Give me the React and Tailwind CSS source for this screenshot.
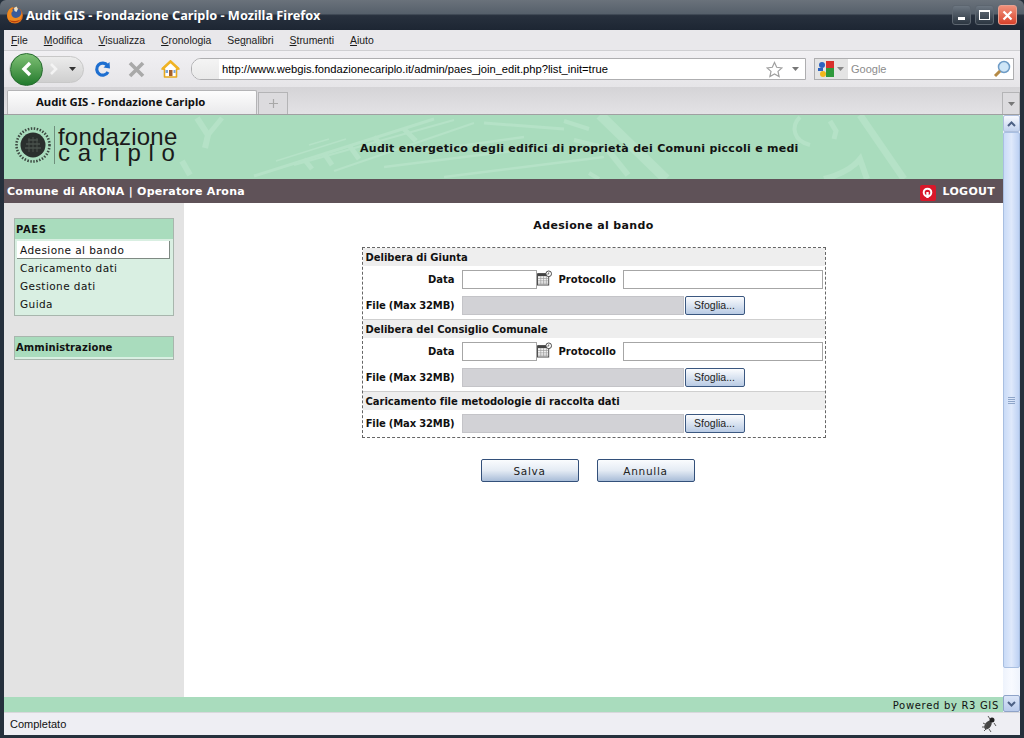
import React from "react";

const ui = "font-['Noto_Sans','Open_Sans',sans-serif]";
const lib = "font-['Liberation_Sans',sans-serif]";
const web = "font-['DejaVu_Sans',sans-serif]";

function Firefox() {
  return (
    <svg width="18" height="18" viewBox="0 0 18 18">
      <circle cx="9" cy="9.500" r="8" fill="#d9661a" />
      <circle cx="10" cy="7.500" r="5.500" fill="#3a5c9a" />
      <path d="M8 2l2.500-1.500L12 3l-1.500 3-2-1z" fill="#e9e2c8" />
      <path d="M1.500 7C2.500 3 5 1.500 7.500 1 6 2.500 6 4 7 5 5 6 5 8 6 10c1.500 2.500 5.500 2.500 7.500.5 1.500-1.500 2-3 2-4.500 1.500 5-1.500 11-7 11C4 17.500 0 12.500 1.500 7z" fill="#ee8a1f" />
      <path d="M3 14c2.500 3.500 8.500 3.500 12-1-3.500 2.500-8.500 2.500-12 1z" fill="#b5400f" />
    </svg>
  );
}

function WinBtn({ kind }) {
  const cls = kind === "close"
    ? "bg-gradient-to-b from-[#f0907a] to-[#d8402a] border-[#e8a090]"
    : "bg-gradient-to-b from-[#6d7782] to-[#2c3641] border-[#5d6670]";
  return (
    <div className={`w-[19px] h-[20px] rounded-[3px] border flex items-center justify-center ${cls}`}>
      {kind === "min" && <div className="w-[7px] h-[3px] bg-white mt-[6px]" />}
      {kind === "max" && <div className="w-[11px] h-[10px] border border-t-[2px] border-white" />}
      {kind === "close" && (
        <svg width="11" height="11" viewBox="0 0 11 11"><path d="M1.500 1.500l8 8M9.500 1.500l-8 8" stroke="#fff" strokeWidth="2.200" /></svg>
      )}
    </div>
  );
}

function MenuItem({ u, rest }) {
  return <span><span className="underline">{u}</span>{rest}</span>;
}

function Caret({ color = "#555" }) {
  return <svg width="7" height="4" viewBox="0 0 7 4"><path d="M0 0h7L3.500 4z" fill={color} /></svg>;
}

function NavBar() {
  return (
    <div className="h-[37px] bg-gradient-to-b from-[#f1f0f3] to-[#e6e5e8] border-t border-[#cfcfd2] flex items-center pl-[5px] pr-[6px] relative shrink-0">
      <div className="w-[77px] h-[27px] rounded-full bg-gradient-to-b from-[#ececec] to-[#cfcfcf] border border-[#c8c8c8] flex items-center relative">
        <div className="absolute left-[0px] top-[-4px] w-[33px] h-[33px] rounded-full bg-gradient-to-b from-[#7fc276] to-[#1f7a2c] border border-[#256b2e] flex items-center justify-center">
          <svg width="14" height="16" viewBox="0 0 14 16"><path d="M10 2L4 8l6 6" stroke="#fff" strokeWidth="3.400" fill="none" /></svg>
        </div>
        <div className="ml-[39px]">
          <svg width="10" height="12" viewBox="0 0 10 12"><path d="M2 1l5 5-5 5" stroke="#f3f3f3" strokeWidth="2.600" fill="none" /></svg>
        </div>
        <div className="ml-[10px]"><Caret color="#333" /></div>
      </div>
      <div className="ml-[10px] w-[17px] h-[17px] shrink-0">
        <svg width="17" height="17" viewBox="0 0 17 17">
          <path d="M13.500 4.500A6 6 0 1 0 14 11" stroke="#1e6fd0" strokeWidth="3.200" fill="none" />
          <path d="M9.500 6.500L16 7.500 15.500 1z" fill="#1e6fd0" />
        </svg>
      </div>
      <div className="ml-[17px] shrink-0">
        <svg width="17" height="17" viewBox="0 0 17 17"><path d="M2 2l13 13M15 2L2 15" stroke="#a9a9a9" strokeWidth="3.600" /></svg>
      </div>
      <div className="ml-[16px] shrink-0">
        <svg width="19" height="18" viewBox="0 0 19 18">
          <path d="M9.500 1L1 9h2.500v8h12V9H18z" fill="#fff" stroke="#e6a91e" strokeWidth="1.600" strokeLinejoin="round" />
          <path d="M1.500 9L9.500 1.500 17.500 9" fill="none" stroke="#f0b323" strokeWidth="2.400" />
          <rect x="8" y="10" width="3.500" height="6" fill="#a5602a" />
          <rect x="4.500" y="10" width="2.500" height="3" fill="#7aa6d8" />
          <rect x="12.500" y="10" width="2" height="3" fill="#7aa6d8" />
        </svg>
      </div>
      <div className="ml-[11px] w-[615px] h-[22px] flex border border-[#aeaeb0] rounded-l-[10px] bg-white shrink-0 overflow-hidden">
        <div className="w-[27px] bg-gradient-to-b from-[#f4f4f4] to-[#e9e9e9] shrink-0" />
        <div className={`flex-1 pl-[3px] text-[11.200px] leading-[21px] text-black ${lib}`}>http://www.webgis.fondazionecariplo.it/admin/paes_join_edit.php?list_init=true</div>
        <div className="flex items-center gap-[9px] pr-[6px]">
          <svg width="17" height="17" viewBox="0 0 17 17"><path d="M8.500 1.500l2.200 4.800 5.200.6-3.900 3.500 1.100 5.200-4.600-2.700-4.600 2.700 1.100-5.200L1.100 6.900l5.200-.6z" fill="#fff" stroke="#a0a0a0" strokeWidth="1.200" /></svg>
          <Caret color="#777" />
        </div>
      </div>
      <div className="ml-[8px] w-[200px] h-[22px] flex border border-[#aeaeb0] bg-white shrink-0">
        <div className="w-[33px] bg-[#e4e4e4] flex items-center pl-[3px] gap-[3px] shrink-0">
          <svg width="16" height="16" viewBox="0 0 16 16">
            <rect x="8" y="0" width="8" height="8" fill="#d8302c" />
            <rect x="8" y="7" width="8" height="9" fill="#2f9a3c" />
            <circle cx="4" cy="4" r="3" fill="#2c62c0" />
            <rect x="0" y="7" width="5" height="3" fill="#2c62c0" />
            <circle cx="5" cy="13" r="3" fill="#f2b81c" />
          </svg>
          <Caret color="#888" />
        </div>
        <div className={`flex-1 pl-[3px] text-[11px] leading-[21px] text-[#8c8c8c] ${lib}`}>Google</div>
        <div className="flex items-center pr-[2px]">
          <svg width="18" height="18" viewBox="0 0 18 18">
            <circle cx="11" cy="7" r="5.500" fill="#cfe6f7" stroke="#6f9cc6" strokeWidth="1.500" />
            <path d="M7 11l-5 5" stroke="#b58a45" strokeWidth="3" />
          </svg>
        </div>
      </div>
    </div>
  );
}

function TabBar() {
  return (
    <div className="h-[27px] bg-gradient-to-b from-[#d5d4d7] to-[#e3e2e5] flex items-end pl-[3px] shrink-0">
      <div className={`w-[250px] h-[24px] bg-gradient-to-b from-[#fdfdfd] to-[#e9e9eb] border-x border-t border-[#b4b4b6] rounded-t-[2px] text-[11.300px] font-bold leading-[22px] pl-[28px] text-[#111] ${ui}`}>
        Audit GIS - Fondazione Cariplo
      </div>
      <div className="ml-[1px] w-[30px] h-[22px] bg-[#dcdbde] border-x border-t border-[#b4b4b6] flex items-center justify-center">
        <svg width="9" height="9" viewBox="0 0 9 9"><path d="M4.500 0v9M0 4.500h9" stroke="#a8a8a8" strokeWidth="1.200" /></svg>
      </div>
      <div className="ml-auto w-[18px] h-[22px] bg-[#dcdbde] border-x border-t border-[#b4b4b6] flex items-center justify-center">
        <Caret color="#777" />
      </div>
    </div>
  );
}

function Scrollbar() {
  return (
    <div className="w-[17px] shrink-0 bg-gradient-to-r from-[#eef3fc] via-[#f8faff] to-[#eef3fc] flex flex-col">
      <div className="h-[17px] bg-gradient-to-b from-[#f7f9fe] to-[#c2d2ee] border border-[#aebfdc] rounded-[2px] flex items-center justify-center shrink-0">
        <svg width="9" height="6" viewBox="0 0 9 6"><path d="M1 5l3.500-3.500L8 5" stroke="#4d6185" strokeWidth="2" fill="none" /></svg>
      </div>
      <div className="flex-1 mb-[27px] bg-gradient-to-r from-[#c9dbf7] via-[#dfe9fb] to-[#bdd1f3] border border-[#a9bfe1] rounded-[2px] flex items-center justify-center">
        <div className="w-[7px] h-[7px] flex flex-col justify-between">
          <div className="h-[1px] bg-[#8ea5c9]" />
          <div className="h-[1px] bg-[#8ea5c9]" />
          <div className="h-[1px] bg-[#8ea5c9]" />
          <div className="h-[1px] bg-[#8ea5c9]" />
        </div>
      </div>
      <div className="h-[17px] bg-gradient-to-b from-[#dce6f8] to-[#b9cbec] border border-[#8ea3c8] rounded-[2px] flex items-center justify-center shrink-0">
        <svg width="9" height="6" viewBox="0 0 9 6"><path d="M1 1l3.500 3.500L8 1" stroke="#4d6185" strokeWidth="2" fill="none" /></svg>
      </div>
    </div>
  );
}

function Watermark() {
  return (
    <svg className="absolute left-0 top-0" width="999" height="64" viewBox="0 0 999 64">
      <g stroke="#b5e2c7" fill="none">
        <g strokeWidth="4">
          <path d="M193 3l11 17-3 13" strokeWidth="6" />
          <path d="M218 3l-14 17" strokeWidth="5" />
          <path d="M178 46l8 14" strokeWidth="6" />
        </g>
        <path d="M250 61L430 4" strokeWidth="3" />
        <path d="M290 50L450 5M330 56L470 8" strokeWidth="2" />
        <path d="M300 44l8 10M320 38l8 12M345 30l10 14M370 22l12 14M400 14l12 12" strokeWidth="5" />
        <path d="M272 46l70-22M305 30l20-6" strokeWidth="1.500" />
        <path d="M380 52L555 30M440 62L600 42M420 36L520 22" strokeWidth="2.500" />
        <path d="M480 8l80 6" strokeWidth="3" />
        <path d="M560 6l25 8M570 25l25 6M585 58l10 6" strokeWidth="4" />
        <path d="M596 0l66 64" strokeWidth="10" />
        <path d="M600 30l24 30" strokeWidth="6" />
        <path d="M796 2C786 12 790 26 806 30" strokeWidth="4" />
        <path d="M826 6l6 10-2 8" strokeWidth="5" />
        <path d="M856 0l44 64" strokeWidth="7" />
        <path d="M820 64C835 60 848 54 856 44l7 20" strokeWidth="6" />
      </g>
    </svg>
  );
}

function Header() {
  return (
    <div className="h-[64px] bg-[#a9dcbd] relative flex items-center overflow-hidden shrink-0">
      <Watermark />
      <div className="relative ml-[10px] mb-[4px] flex items-center">
        <svg width="38" height="38" viewBox="0 0 38 38">
          <circle cx="19" cy="19" r="12.500" fill="#2a2f2d" />
          <circle cx="19" cy="19" r="16.500" fill="none" stroke="#3d4a42" strokeWidth="2.600" strokeDasharray="1.500 1.500" />
          <path d="M11 22h16M12 18h14M14 14h10" stroke="#59625c" strokeWidth="1.200" />
          <path d="M15 12v14M19 11v15M23 12v14" stroke="#4a534d" strokeWidth="1" />
        </svg>
        <div className="w-px h-[38px] bg-[#6f8f7c] ml-[2px]" />
        <div className={`ml-[3px] mb-[4px] flex flex-col ${lib} text-[#1a1a1a]`}>
          <span className="text-[24px] pt-[2px] leading-[18px] tracking-[0.2px]">fondazione</span>
          <span className="text-[24px] leading-[14px] tracking-[7.700px]">cariplo</span>
        </div>
      </div>
      <div className={`absolute left-[356px] top-[27px] text-[11px] font-bold leading-[14px] tracking-[0.270px] text-[#111] ${web}`}>
        Audit energetico degli edifici di proprietà dei Comuni piccoli e medi
      </div>
    </div>
  );
}

function Sidebar() {
  return (
    <div className={`w-[180px] bg-[#e3e3e3] shrink-0 pt-[15px] pl-[10px] pr-[10px] ${web}`}>
      <div className="border border-[#a8b6ad] bg-[#d9efe2] h-[98px]">
        <div className="h-[20px] bg-[#a9dcbd] text-[10px] font-bold leading-[22px] pl-[1px] tracking-[0.600px] text-[#111]">PAES</div>
        <div className="pt-[2px] pl-[2px] pr-[3px] text-[10.500px] tracking-[0.430px] text-[#111]">
          <div className="h-[18px] bg-white border-r border-b border-[#7f8a83] leading-[18px] pl-[3px]">Adesione al bando</div>
          <div className="h-[18px] leading-[18px] pl-[3px]">Caricamento dati</div>
          <div className="h-[18px] leading-[18px] pl-[3px]">Gestione dati</div>
          <div className="h-[18px] leading-[18px] pl-[3px]">Guida</div>
        </div>
      </div>
      <div className="border border-[#a8b6ad] bg-[#d9efe2] h-[24px] mt-[20px]">
        <div className="h-[20px] bg-[#a9dcbd] text-[10px] font-bold leading-[22px] pl-[1px] text-[#111] tracking-[0.100px]">Amministrazione</div>
      </div>
    </div>
  );
}

function Section({ children }) {
  return <div className="h-[18px] bg-[#eeeeee] text-[10px] font-bold leading-[20px] pl-[3px] text-[#111] tracking-[-0.020px]">{children}</div>;
}

function Label({ children, cls }) {
  return <div className={`w-[92px] text-right text-[10px] font-bold text-[#111] shrink-0 whitespace-nowrap ${cls || ""}`}>{children}</div>;
}

function CalendarIcon() {
  return (
    <svg className="mb-[4px] w-[15px] shrink-0" width="15" height="16" viewBox="0 0 16 16">
      <rect x="0.500" y="3.500" width="12" height="12" fill="#f4f4f4" stroke="#444" />
      <rect x="1" y="3" width="11" height="3" fill="#444" />
      <path d="M1 8.500h11M1 11h11M1 13.500h11M4 6v9M7 6v9M10 6v9" stroke="#999" strokeWidth="0.700" />
      <circle cx="12.500" cy="3.500" r="3" fill="#fff" stroke="#444" />
      <path d="M12.500 2v1.800h-1.500" stroke="#444" strokeWidth="0.800" fill="none" />
    </svg>
  );
}

function DateRow() {
  return (
    <div className="h-[26px] flex items-center pt-[1px]">
      <Label>Data</Label>
      <div className="w-[75px] h-[19px] ml-[7px] bg-white border border-[#a6a6a6] shrink-0" />
      <CalendarIcon />
      <div className="ml-[7px] w-[57px] text-[10px] font-bold text-[#111] whitespace-nowrap">Protocollo</div>
      <div className="w-[200px] h-[19px] ml-[7px] bg-white border border-[#a6a6a6] shrink-0" />
    </div>
  );
}

function FileRow({ border }) {
  return (
    <div className={`flex items-center ${border ? "h-[28px] border-b border-[#cfcfcf]" : "h-[27px]"}`}>
      <Label cls="tracking-[-0.160px]">File (Max 32MB)</Label>
      <div className="w-[222px] h-[19px] ml-[7px] bg-[#d2d2d6] border border-[#c4c4c8] shrink-0" />
      <div className={`w-[60px] h-[19px] ml-[1px] rounded-[2px] border border-[#3a5780] bg-gradient-to-b from-[#fbfcfe] to-[#b9cbe4] text-center text-[10.500px] leading-[16px] text-[#222] ${lib}`}>Sfoglia...</div>
    </div>
  );
}

function BigBtn({ children }) {
  return (
    <div className={`w-[98px] h-[23px] rounded-[2px] border border-[#33507a] bg-gradient-to-b from-[#fafcfe] via-[#e4ebf4] to-[#a9bdd8] text-center text-[10.500px] leading-[22px] tracking-[0.700px] text-[#222] ${web}`}>{children}</div>
  );
}

function Main() {
  return (
    <div className={`flex-1 bg-white flex flex-col items-center pt-[15px] ${web}`}>
      <div className="text-[11px] font-bold leading-[16px] tracking-[0.350px] text-[#111]">Adesione al bando</div>
      <div className="w-[464px] h-[191px] mt-[13px] border border-dashed border-[#666] flex flex-col">
        <Section>Delibera di Giunta</Section>
        <DateRow />
        <FileRow border />
        <Section>Delibera del Consiglio Comunale</Section>
        <DateRow />
        <FileRow border />
        <Section>Caricamento file metodologie di raccolta dati</Section>
        <FileRow />
      </div>
      <div className="flex gap-[18px] mt-[21px] mr-[12px]">
        <BigBtn>Salva</BigBtn>
        <BigBtn>Annulla</BigBtn>
      </div>
    </div>
  );
}

export default function App() {
  return (
    <div className={`w-[1024px] h-[738px] bg-[#25303c] flex flex-col overflow-hidden ${ui}`}>
      <div className="h-[30px] shrink-0 bg-[linear-gradient(to_bottom,#6a727b_0%,#56606b_45%,#27303d_52%,#1d2633_100%)] flex items-center pl-[6px] pr-[7px] rounded-t-[6px]">
        <Firefox />
        <div className={`ml-[2px] text-white text-[12.750px] font-bold leading-[18px] ${ui}`}>Audit GIS - Fondazione Cariplo - Mozilla Firefox</div>
        <div className="ml-auto flex gap-[4px]">
          <WinBtn kind="min" />
          <WinBtn kind="max" />
          <WinBtn kind="close" />
        </div>
      </div>
      <div className="flex-1 mx-[4px] mb-[3px] flex flex-col min-h-0">
        <div className={`h-[20px] bg-[#e9e8eb] flex items-center gap-[16px] pl-[7px] pt-[2px] text-[10.400px] text-[#1a1a1a] shrink-0 ${lib}`}>
          <MenuItem u="F" rest="ile" />
          <MenuItem u="M" rest="odifica" />
          <MenuItem u="V" rest="isualizza" />
          <MenuItem u="C" rest="ronologia" />
          <span>Se<span className="underline">g</span>nalibri</span>
          <MenuItem u="S" rest="trumenti" />
          <MenuItem u="A" rest="iuto" />
        </div>
        <NavBar />
        <TabBar />
        <div className="flex-1 flex min-h-0 border-t border-[#a0a0a2]">
          <div className="flex-1 flex flex-col min-w-0">
            <Header />
            <div className={`h-[24px] bg-[#5f5258] flex items-center pl-[3px] pr-[8px] pt-[3px] text-white text-[11px] font-bold tracking-[0.270px] shrink-0 ${web}`}>
              <span>Comune di ARONA | Operatore Arona</span>
              <div className="ml-auto flex items-center gap-[7px]">
                <div className="w-[16px] h-[16px] rounded-[2px] bg-[#d8182a] flex items-center justify-center">
                  <svg width="11" height="12" viewBox="0 0 11 12"><circle cx="5.500" cy="5.500" r="3.800" fill="none" stroke="#fff" strokeWidth="2" /><path d="M5.500 5v6" stroke="#fff" strokeWidth="2.400" /></svg>
                </div>
                <span>LOGOUT</span>
              </div>
            </div>
            <div className="flex-1 flex min-h-0">
              <Sidebar />
              <Main />
            </div>
            <div className={`h-[15px] bg-[#a9dcbd] text-right text-[10px] leading-[17px] tracking-[0.680px] pr-[4px] text-[#111] shrink-0 ${web}`}>Powered by R3 GIS</div>
          </div>
          <Scrollbar />
        </div>
        <div className={`h-[23px] bg-[#eeeef3] flex items-center pl-[6px] text-[11px] text-[#111] border-t border-[#d8d8dc] shrink-0 ${lib}`}>
          <span>Completato</span>
          <div className="ml-auto flex items-center mr-[22px]">
            <svg width="18" height="18" viewBox="0 0 18 18">
              <ellipse cx="8" cy="10" rx="3" ry="5" transform="rotate(35 8 10)" fill="#444" />
              <circle cx="12" cy="5" r="2.500" fill="#222" />
              <path d="M3 8l4 2M2 12l4 0M4 16l3-3M10 4L8 1M14 8l2 3M9 14l2 3" stroke="#555" />
            </svg>
          </div>
        </div>
      </div>
    </div>
  );
}
